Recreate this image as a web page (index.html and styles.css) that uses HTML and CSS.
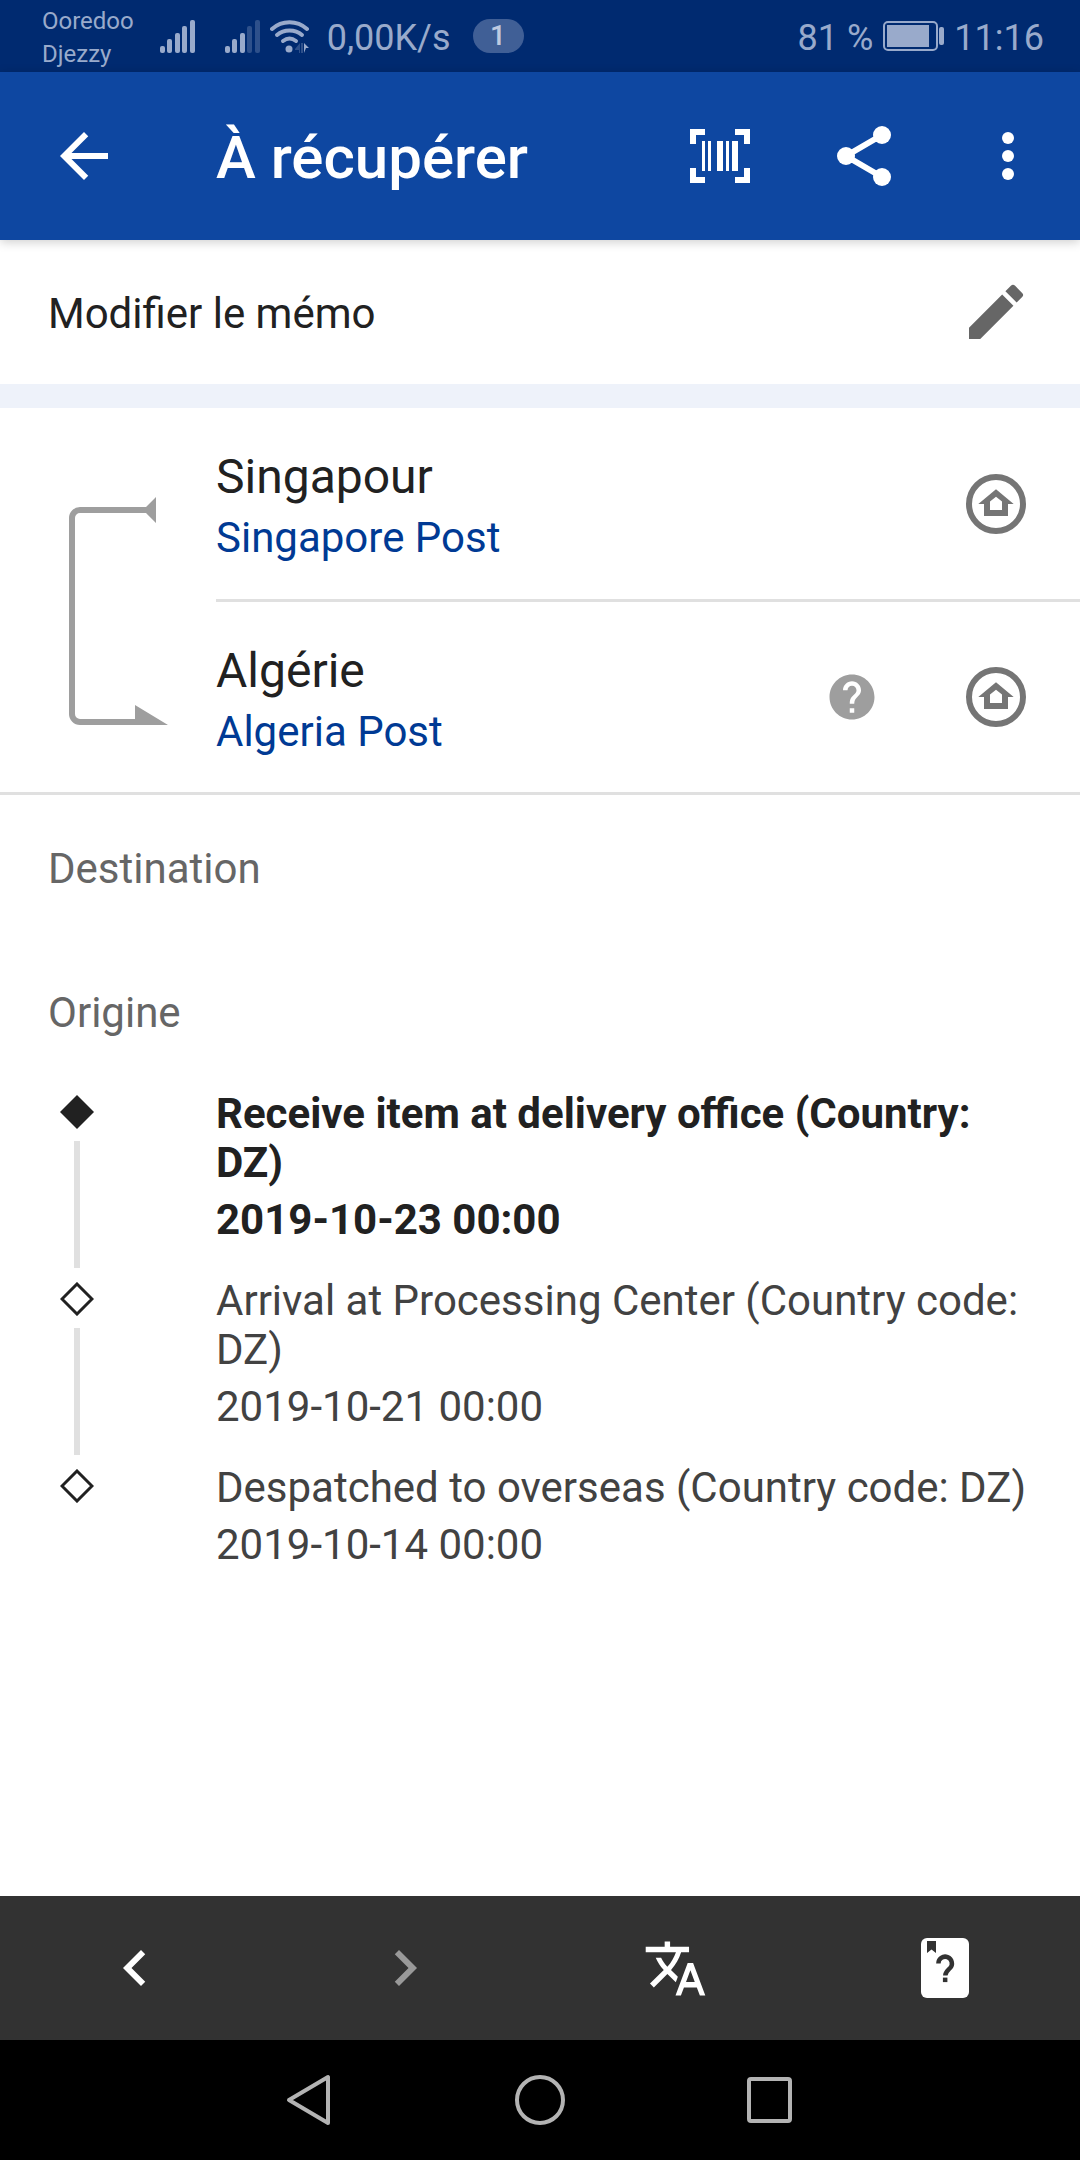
FILE: index.html
```html
<!DOCTYPE html>
<html lang="fr">
<head>
    <meta charset="UTF-8">
    <meta name="viewport" content="width=device-width, initial-scale=1.0">
    <title>À récupérer</title>
    <link rel="stylesheet" href="styles.css">
</head>
<body>
    <!-- Status Bar -->
    <div class="status-bar">
        <div class="carriers">
            <div>Ooredoo</div>
            <div>Djezzy</div>
        </div>
        <svg class="signal" viewBox="0 0 35 33">
            <rect x="0" y="26" width="5" height="7" rx="2"/>
            <rect x="7" y="19" width="5" height="14" rx="2"/>
            <rect x="15" y="13" width="5" height="20" rx="2"/>
            <rect x="22" y="6" width="5" height="27" rx="2"/>
            <rect x="30" y="0" width="5" height="33" rx="2"/>
        </svg>
        <svg class="signal second" viewBox="0 0 35 33">
            <rect x="0" y="26" width="5" height="7" rx="2"/>
            <rect x="7" y="19" width="5" height="14" rx="2"/>
            <rect x="15" y="13" width="5" height="20" rx="2"/>
            <rect class="dim" x="22" y="6" width="5" height="27" rx="2"/>
            <rect class="dim" x="30" y="0" width="5" height="33" rx="2"/>
        </svg>
        <svg class="wifi" viewBox="0 0 40 33">
            <g fill="none" stroke="currentColor" stroke-width="4" stroke-linecap="round">
                <path d="M2 9C12 0 27 0 37 9"/>
                <path d="M7 15C14 9 25 9 32 15"/>
                <path d="M13 21C17 18 22 18 26 21"/>
            </g>
            <circle cx="19" cy="29" r="3.5"/>
            <path class="dim" d="M25 29L30 23V33H29V30H25ZM31 23H33V33H31Z"/>
            <path d="M34 23L39 28H36L34 33Z"/>
        </svg>
        <span class="speed">0,00K/s</span>
        <span class="badge">1</span>
        <div class="status-right">
            <span>81 %</span>
            <svg class="battery" viewBox="0 0 61 30">
                <rect x="1" y="1" width="53" height="28" rx="4" fill="none" stroke="currentColor" stroke-width="2"/>
                <rect x="4" y="4" width="42" height="22"/>
                <rect x="56" y="6" width="5" height="18" rx="2"/>
            </svg>
            <span>11:16</span>
        </div>
    </div>

    <!-- App Bar -->
    <header class="app-bar">
        <button class="back" aria-label="Retour">
            <svg class="icon" viewBox="0 0 24 24"><path d="M20 11H7.83l5.59-5.59L12 4l-8 8 8 8 1.41-1.41L7.83 13H20v-2z"/></svg>
        </button>
        <h1>À récupérer</h1>
        <button aria-label="Code-barres">
            <svg class="icon" viewBox="0 0 24 24"><path d="M2 3h5v2H4v3H2zM17 3h5v5h-2V5h-3zM2 16h2v3h3v2H2zM20 16h2v5h-5v-2h3zM6 7h1v10H6zM8 7h1v10H8zM11 7h2v10h-2zM14 7h1v10h-1zM16 7h2v10h-2z"/></svg>
        </button>
        <button aria-label="Partager">
            <svg class="icon" viewBox="0 0 24 24">
                <path d="M18 5L6 12l12 7" fill="none" stroke="currentColor" stroke-width="2"/>
                <circle cx="18" cy="5" r="3"/>
                <circle cx="6" cy="12" r="3"/>
                <circle cx="18" cy="19" r="3"/>
            </svg>
        </button>
        <button aria-label="Plus">
            <svg class="icon" viewBox="0 0 24 24">
                <circle cx="12" cy="6" r="2"/>
                <circle cx="12" cy="12" r="2"/>
                <circle cx="12" cy="18" r="2"/>
            </svg>
        </button>
    </header>

    <main>
        <!-- Memo -->
        <div class="memo">
            <span>Modifier le mémo</span>
            <button aria-label="Modifier">
                <svg class="icon" viewBox="0 0 24 24"><path d="M3 17.25V21h3.75L17.81 9.94l-3.75-3.75L3 17.25zM20.71 7.04a1 1 0 0 0 0-1.41l-2.34-2.34a1 1 0 0 0-1.41 0l-1.83 1.83 3.75 3.75 1.83-1.83z"/></svg>
            </button>
        </div>

        <!-- Postal services -->
        <section class="route">
            <svg class="route-line" viewBox="0 0 216 384">
                <path d="M150 102H80a8 8 0 0 0-8 8V306a8 8 0 0 0 8 8H140" fill="none" stroke="currentColor" stroke-width="6"/>
                <path d="M156 89V115L146 105V99ZM135 297L168 317H135Z"/>
            </svg>
            <div class="services">
                <div class="service">
                    <div class="service-name">
                        <h2>Singapour</h2>
                        <a href="#">Singapore Post</a>
                    </div>
                    <button class="home" aria-label="Site web Singapore Post">
                        <svg class="icon" viewBox="0 0 24 24">
                            <circle cx="12" cy="12" r="9" fill="none" stroke="currentColor" stroke-width="2"/>
                            <path fill-rule="evenodd" d="M12 7.1L17.9 12H16v4H8v-4H6.1zM12 9.6l-2 1.6V14h4v-2.8z"/>
                        </svg>
                    </button>
                </div>
                <div class="service">
                    <div class="service-name">
                        <h2>Algérie</h2>
                        <a href="#">Algeria Post</a>
                    </div>
                    <button class="help" aria-label="Aide">
                        <svg viewBox="0 0 24 24"><path d="M12 2C6.48 2 2 6.48 2 12s4.480 10 10 10 10-4.480 10-10S17.520 2 12 2zm1 17h-2v-2h2v2zm2.070-7.750l-.9.920C13.450 12.900 13 13.500 13 15h-2v-.5c0-1.100.45-2.100 1.170-2.830l1.240-1.260c.37-.36.590-.86.590-1.410 0-1.100-.9-2-2-2s-2 .9-2 2H8c0-2.210 1.790-4 4-4s4 1.790 4 4c0 .88-.36 1.680-.93 2.250z"/></svg>
                    </button>
                    <button class="home" aria-label="Site web Algeria Post">
                        <svg class="icon" viewBox="0 0 24 24">
                            <circle cx="12" cy="12" r="9" fill="none" stroke="currentColor" stroke-width="2"/>
                            <path fill-rule="evenodd" d="M12 7.1L17.9 12H16v4H8v-4H6.1zM12 9.6l-2 1.6V14h4v-2.8z"/>
                        </svg>
                    </button>
                </div>
            </div>
        </section>

        <!-- Tracking history -->
        <h3>Destination</h3>
        <h3>Origine</h3>
        <ol class="timeline">
            <li class="event current">
                <div class="marker">
                    <svg viewBox="0 0 34 34"><path d="M17 0L34 17 17 34 0 17z"/></svg>
                </div>
                <div class="details">
                    <p>Receive item at delivery office (Country: DZ)</p>
                    <time datetime="2019-10-23T00:00">2019-10-23 00:00</time>
                </div>
            </li>
            <li class="event">
                <div class="marker">
                    <svg viewBox="0 0 34 34"><path d="M17 2L32 17 17 32 2 17z" fill="none" stroke="currentColor" stroke-width="3"/></svg>
                </div>
                <div class="details">
                    <p>Arrival at Processing Center (Country code: DZ)</p>
                    <time datetime="2019-10-21T00:00">2019-10-21 00:00</time>
                </div>
            </li>
            <li class="event">
                <div class="marker">
                    <svg viewBox="0 0 34 34"><path d="M17 2L32 17 17 32 2 17z" fill="none" stroke="currentColor" stroke-width="3"/></svg>
                </div>
                <div class="details">
                    <p>Despatched to overseas (Country code: DZ)</p>
                    <time datetime="2019-10-14T00:00">2019-10-14 00:00</time>
                </div>
            </li>
        </ol>
    </main>

    <!-- Toolbar -->
    <div class="toolbar">
        <button aria-label="Précédent">
            <svg class="icon" viewBox="0 0 24 24"><path d="M15.410 7.410L14 6l-6 6 6 6 1.410-1.410L10.830 12z"/></svg>
        </button>
        <button aria-label="Suivant" disabled>
            <svg class="icon" viewBox="0 0 24 24"><path d="M10 6L8.590 7.410 13.170 12l-4.580 4.590L10 18l6-6z"/></svg>
        </button>
        <button aria-label="Traduire">
            <svg class="icon translate" viewBox="0 0 24 24"><path d="M12.870 15.070l-2.540-2.510.03-.03c1.740-1.940 2.980-4.170 3.710-6.530H17V4h-7V2H8v2H1v1.990h11.170C11.500 7.920 10.440 9.750 9 11.350 8.070 10.320 7.300 9.190 6.690 8h-2c.73 1.630 1.730 3.170 2.980 4.560l-5.090 5.020L4 19l5-5 3.110 3.110.76-2.040zM18.500 10h-2L12 22h2l1.120-3h4.750L21 22h2l-4.500-12zm-2.620 7l1.620-4.330L19.120 17h-3.240z"/></svg>
        </button>
        <button aria-label="Guide">
            <svg class="icon" viewBox="0 0 24 24">
                <rect x="4" y="2" width="16" height="20" rx="2"/>
                <path class="cutout" d="M6 3h3v4L7.500 5.800 6 7z"/>
                <path d="M9.800 10.500a2.250 2.250 0 1 1 3.900 1.500c-.9.900-1.600 1.300-1.600 2.500" fill="none" stroke="#323232" stroke-width="1.500"/>
                <path class="cutout" d="M11.300 15.200h1.500v1.500h-1.500z"/>
            </svg>
        </button>
    </div>

    <!-- System navigation -->
    <nav class="system-nav">
        <button aria-label="Retour système">
            <svg viewBox="0 0 52 52"><path d="M44 3V49L5 26z"/></svg>
        </button>
        <button aria-label="Accueil">
            <svg viewBox="0 0 52 52"><circle cx="26" cy="26" r="23"/></svg>
        </button>
        <button aria-label="Applications récentes">
            <svg viewBox="0 0 52 52"><rect x="5" y="5" width="41" height="42" rx="2"/></svg>
        </button>
    </nav>
</body>
</html>
```
FILE: styles.css
```css
* {
    box-sizing: border-box;
}

body {
    font-family: Roboto, sans-serif;
    font-size: 42px;
    line-height: 49px;
    margin: 0;
    min-height: 100vh;
    display: flex;
    flex-direction: column;
    background-color: #fff;
    color: #212121;
}

h1, h2, h3, p, ol {
    margin: 0;
    padding: 0;
    font-size: inherit;
}

h2, h3 {
    font-weight: normal;
}

button {
    display: flex;
    align-items: center;
    justify-content: center;
    background: none;
    border: none;
    padding: 0;
    color: inherit;
    cursor: pointer;
}

svg {
    display: block;
    flex: none;
    fill: currentColor;
}

.icon {
    width: 72px;
    height: 72px;
}

/* Status Bar */
.status-bar {
    display: flex;
    align-items: center;
    height: 72px;
    padding: 0 36px 0 42px;
    background-color: #002a70;
    color: #99aacb;
    font-size: 36px;
}

.carriers {
    font-size: 24px;
    line-height: 33px;
    margin-right: 26px;
    padding-top: 4px;
}

.signal {
    width: 35px;
    height: 33px;
}

.signal.second {
    margin: 0 10px 0 30px;
}

.status-bar .dim {
    opacity: 0.3;
}

.wifi {
    width: 40px;
    height: 33px;
}

.speed {
    margin: 4px 22px 0 17px;
}

.badge {
    width: 51px;
    border-radius: 17px;
    background-color: #405f96;
    color: #bfcae0;
    font-size: 28px;
    font-weight: 500;
    line-height: 34px;
    text-align: center;
}

.status-right {
    display: flex;
    align-items: center;
    gap: 10px;
    margin-left: auto;
    padding-top: 4px;
}

.battery {
    width: 61px;
    height: 30px;
    margin-bottom: 4px;
}

/* App Bar */
.app-bar {
    display: flex;
    position: relative;
    height: 168px;
    align-items: stretch;
    background-color: #0e47a1;
    color: white;
    box-shadow: 0 2px 10px rgba(0, 0, 0, 0.2);
}

.app-bar h1 {
    flex: 1;
    font-size: 60px;
    font-weight: 500;
    line-height: 172px;
    white-space: nowrap;
}

.app-bar button {
    width: 144px;
}

.app-bar .back {
    width: 168px;
    margin-right: 48px;
}

main {
    flex: 1;
}

/* Memo */
.memo {
    display: flex;
    align-items: center;
    justify-content: space-between;
    height: 168px;
    padding: 0 48px;
    border-bottom: 24px solid #eef2fa;
}

.memo span {
    padding-top: 2px;
}

.memo button {
    color: #666;
}

/* Postal services */
.route {
    display: flex;
    border-bottom: 3px solid #e0e0e0;
}

.route-line {
    width: 216px;
    height: 384px;
    color: #9e9e9e;
}

.services {
    flex: 1;
}

.service {
    display: flex;
    align-items: center;
    height: 191px;
    padding-right: 48px;
}

.service + .service {
    height: 193px;
    border-top: 3px solid #e0e0e0;
}

.service-name {
    flex: 1;
    padding-top: 8px;
}

.service h2 {
    font-size: 48px;
    line-height: 60px;
}

.service a {
    display: block;
    line-height: 61px;
    color: #003a94;
    text-decoration: none;
}

.home {
    color: #757575;
}

.help {
    margin-right: 81px;
    color: #9e9e9e;
}

.help svg {
    width: 54px;
    height: 54px;
}

/* Tracking history */
h3 {
    padding: 49px 48px 46px;
    color: #666;
}

.timeline {
    list-style: none;
    padding-top: 6px;
}

.event {
    display: flex;
    padding-right: 48px;
    color: #424242;
}

.marker {
    display: flex;
    flex-direction: column;
    align-items: center;
    width: 34px;
    margin: 0 122px 0 60px;
    padding: 6px 0 8px;
    gap: 12px;
    color: #212121;
}

.marker svg {
    width: 34px;
    height: 34px;
}

.event:not(:last-child) .marker::after {
    content: "";
    flex: 1;
    width: 6px;
    background-color: #e0e0e0;
}

.details {
    flex: 1;
    padding-bottom: 32px;
}

.details time {
    display: block;
    margin-top: 8px;
}

.current {
    color: #212121;
    font-weight: bold;
}

/* Toolbar */
.toolbar {
    display: flex;
    height: 144px;
    background-color: #323232;
    color: white;
}

.toolbar button {
    flex: 1;
}

.toolbar button:disabled {
    color: #999;
}

.translate {
    width: 65px;
    height: 65px;
}

.cutout {
    fill: #323232;
}

/* System navigation */
.system-nav {
    display: flex;
    justify-content: center;
    height: 120px;
    background-color: black;
    color: #b3b3b3;
}

.system-nav button {
    width: 230px;
}

.system-nav svg {
    width: 52px;
    height: 52px;
    fill: none;
    stroke: currentColor;
    stroke-width: 4;
    stroke-linejoin: round;
}
```
